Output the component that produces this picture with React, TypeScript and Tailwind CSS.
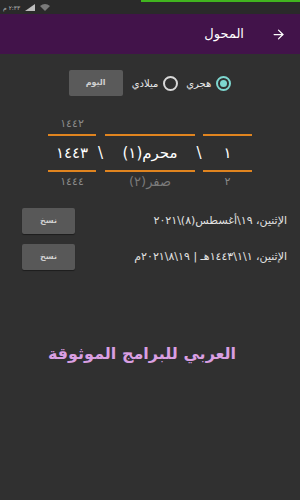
import { ArrowRight } from "lucide-react";

function Radio({ checked }: { checked: boolean }) {
  return checked ? (
    <span className="flex h-[15px] w-[15px] items-center justify-center rounded-full border-2 border-[#7ed6cf]">
      <span className="h-[7px] w-[7px] rounded-full bg-[#7ed6cf]" />
    </span>
  ) : (
    <span className="h-[15px] w-[15px] rounded-full border-2 border-[#d8d8d8]" />
  );
}

function CopyRow({ text }: { text: string }) {
  return (
    <div className="flex items-center justify-between pl-[22px] pr-[13px]">
      <button
        type="button"
        className="flex h-[26px] w-[53px] items-center justify-center rounded-[2px] bg-[#585858] text-[8px] font-bold text-[#d0d0d0] shadow-[0_1px_1px_rgba(0,0,0,0.4)]"
      >
        نسخ
      </button>
      <span dir="rtl" className="text-[11px] text-[#e2e2e2]">
        {text}
      </span>
    </div>
  );
}

export default function App() {
  return (
    <div className="flex h-[500px] w-[300px] flex-col bg-[#303030] font-['DejaVu_Sans',sans-serif]">
      <div className="relative flex h-[14px] items-center gap-[5px] bg-[#2a2a2a] pl-[3px] text-[6px] text-[#b8b8b8]">
        <div className="absolute left-[141px] right-0 top-0 h-[2px] bg-[#41b51f]" />
        <span dir="rtl">٢:٣٣ م</span>
        <svg width="10" height="7" viewBox="0 0 10 7">
          <path d="M0 7 L10 0 L10 7 Z" fill="#bdbdbd" />
        </svg>
        <svg width="10" height="7" viewBox="0 0 10 7">
          <path d="M0 2 Q5 -2 10 2 L5 7 Z" fill="#7a7a7a" />
        </svg>
      </div>

      <div className="flex h-[40px] items-center justify-end gap-[27px] bg-[#42134a] pr-[14px]">
        <span className="text-[13px] text-white">المحول</span>
        <ArrowRight size={15} strokeWidth={2} className="text-white" />
      </div>

      <div className="mt-[16px] flex items-center justify-center gap-[5px]">
        <button
          type="button"
          className="mr-[4px] flex h-[26px] w-[54px] items-center justify-center rounded-[2px] bg-[#5a5a5a] text-[8px] font-bold text-[#d0d0d0]"
        >
          اليوم
        </button>
        <span className="text-[10px] text-[#e8e8e8]">ميلادي</span>
        <Radio checked={false} />
        <span className="ml-[3px] text-[10px] text-[#e8e8e8]">هجري</span>
        <Radio checked={true} />
      </div>

      <div className="mt-[18px] grid grid-cols-[48px_9px_90px_8px_49px] pl-[48px] text-center">
        <span className="h-[20px] text-[11px] leading-[20px] text-[#8a8a8a]">١٤٤٢</span>
        <span />
        <span />
        <span />
        <span />

        <span className="h-[2px] bg-[#e0841f]" />
        <span />
        <span className="h-[2px] bg-[#e0841f]" />
        <span />
        <span className="h-[2px] bg-[#e0841f]" />

        <span className="h-[34px] text-[15px] leading-[34px] text-white">١٤٤٣</span>
        <span className="text-[15px] leading-[34px] text-white">\</span>
        <span className="text-[15px] leading-[34px] text-white">محرم(١)</span>
        <span className="text-[15px] leading-[34px] text-white">\</span>
        <span className="text-[15px] leading-[34px] text-white">١</span>

        <span className="h-[2px] bg-[#e0841f]" />
        <span />
        <span className="h-[2px] bg-[#e0841f]" />
        <span />
        <span className="h-[2px] bg-[#e0841f]" />

        <span className="h-[20px] text-[11px] leading-[20px] text-[#8a8a8a]">١٤٤٤</span>
        <span />
        <span className="text-[13px] leading-[20px] text-[#7a7a7a]">صفر(٢)</span>
        <span />
        <span className="text-[11px] leading-[20px] text-[#8a8a8a]">٢</span>
      </div>

      <div className="mt-[16px] flex flex-col gap-[10px]">
        <CopyRow text="الإثنين، ١٩\أغسطس(٨)\٢٠٢١" />
        <CopyRow text="الإثنين، ١\١\١٤٤٣هـ | ١٩\٨\٢٠٢١م" />
      </div>

      <div className="mt-[72px] pr-[16px] text-center text-[16px] font-bold text-[#d99fe2]" dir="rtl">
        العربي للبرامج الموثوقة
      </div>
    </div>
  );
}
